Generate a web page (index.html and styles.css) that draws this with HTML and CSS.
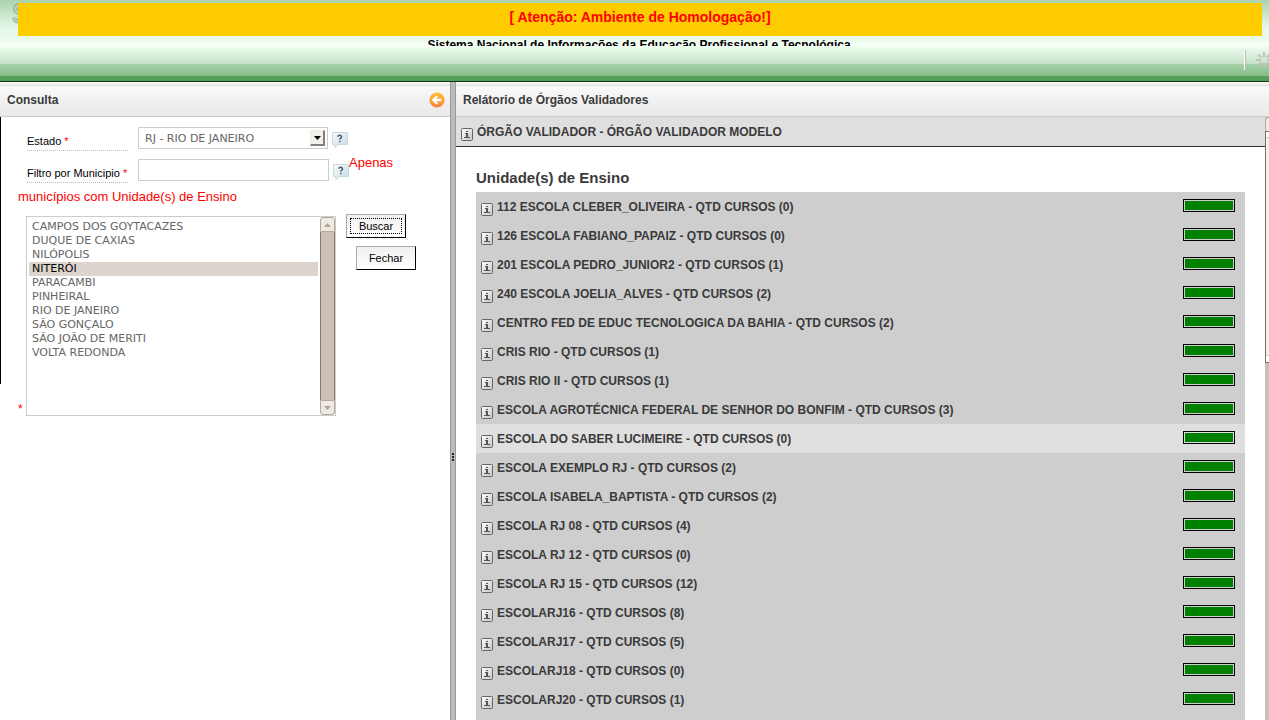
FILE: index.html
```html
<!DOCTYPE html>
<html lang="pt-BR">
<head>
<meta charset="utf-8">
<title>Sistec</title>
<link rel="stylesheet" href="styles.css">
</head>
<body>
<svg class="defs" aria-hidden="true">
  <defs>
    <linearGradient id="orange" x1="0" y1="0" x2="0" y2="1"><stop offset="0" stop-color="#ffc22e"/><stop offset="1" stop-color="#ff7f3c"/></linearGradient>
    <linearGradient id="key" x1="0" y1="0" x2="1" y2="1"><stop offset="0" stop-color="#fff"/><stop offset="1" stop-color="#c4c4c4"/></linearGradient>
    <linearGradient id="bubble" x1="0" y1="0" x2="1" y2="1"><stop offset="0" stop-color="#f8fbfc"/><stop offset="1" stop-color="#c6dbe4"/></linearGradient>
  </defs>
  <symbol id="info" viewBox="0 0 12 13">
    <rect x=".5" y=".5" width="11" height="12" rx="1" fill="url(#key)" stroke="#666"/>
    <path d="M5 3h2v1H5zM4 5h3v4h2v1H3V9h2V6H4z" fill="#555"/>
  </symbol>
  <symbol id="help" viewBox="0 0 16 16">
    <path d="M.5 .5h15v12H6L3 15.500 2.500 12.500h-2z" fill="url(#bubble)" stroke="#c8d8df"/>
    <path d="M6 4.800C6 2.800 9.600 2.800 9.500 4.900 9.400 6.200 7.900 6 7.900 7.600M7.900 8.800v1.400" fill="none" stroke="#4c5a6b" stroke-width="1.500"/>
  </symbol>
</svg>
<header class="top">
  <div class="logo">SISTEC</div>
  <div class="alert">[ Atenção: Ambiente de Homologação!]</div>
  <div class="system"><span>Sistema Nacional de Informações da Educação Profissional e Tecnológica</span></div>
  <div class="toolbar">
    <span class="divider"></span>
    <svg class="spinner" viewBox="0 0 16 16" aria-hidden="true"><path d="M8 0v5M8 11v5M0 8h5M11 8h5M2.500 2.500l3 3M10.500 10.500l3 3M13.500 2.500l-3 3M5.500 10.500l-3 3" stroke="#c0c0c0" stroke-width="2"/></svg>
  </div>
</header>
<main class="panes">
  <section class="query">
    <div class="bar">
      <h2>Consulta</h2>
      <button class="collapse" type="button" aria-label="Recolher"><svg viewBox="0 0 16 16"><circle cx="8" cy="8" r="7.600" fill="url(#orange)"/><path d="M12.500 8H5M8.200 4.200L4.400 8l3.800 3.800" fill="none" stroke="#fff" stroke-width="2.400"/></svg></button>
    </div>
    <form class="form">
      <div class="field">
        <label for="estado">Estado <em>*</em></label>
        <div class="combo">
          <select id="estado"><option>RJ - RIO DE JANEIRO</option></select>
          <span class="arrow"><svg viewBox="0 0 7 4"><path d="M0 0h7L3.500 4z"/></svg></span>
        </div>
        <svg class="help"><use href="#help"/></svg>
      </div>
      <div class="field">
        <label for="filtro">Filtro por Municipio <em>*</em></label>
        <input id="filtro" type="text">
        <svg class="help"><use href="#help"/></svg>
        <span class="note">Apenas</span>
      </div>
      <p class="note rest">municípios com Unidade(s) de Ensino</p>
      <div class="choose">
        <em class="required">*</em>
        <div class="listbox">
          <select size="10" aria-label="Municípios">
            <option>CAMPOS DOS GOYTACAZES</option>
            <option>DUQUE DE CAXIAS</option>
            <option>NILÓPOLIS</option>
            <option selected>NITERÓI</option>
            <option>PARACAMBI</option>
            <option>PINHEIRAL</option>
            <option>RIO DE JANEIRO</option>
            <option>SÃO GONÇALO</option>
            <option>SÃO JOÃO DE MERITI</option>
            <option>VOLTA REDONDA</option>
          </select>
          <div class="scroll" aria-hidden="true">
            <span class="step up"><svg viewBox="0 0 7 4"><path d="M0 4h7L3.500 0z"/></svg></span>
            <span class="thumb"></span>
            <span class="step down"><svg viewBox="0 0 7 4"><path d="M0 0h7L3.500 4z"/></svg></span>
          </div>
        </div>
        <div class="actions">
          <button type="button" class="btn default"><span>Buscar</span></button>
          <button type="button" class="btn close"><span>Fechar</span></button>
        </div>
      </div>
    </form>
  </section>
  <div class="splitter"><span></span></div>
  <section class="report">
    <div class="bar"><h2>Relátorio de Órgãos Validadores</h2></div>
    <div class="view">
      <div class="content">
        <div class="agency"><button type="button" class="info" aria-label="Detalhes"><svg><use href="#info"/></svg></button><span>ÓRGÃO VALIDADOR - ÓRGÃO VALIDADOR MODELO</span></div>
        <h3>Unidade(s) de Ensino</h3>
        <ul class="units">
          <li><button type="button" class="info" aria-label="Detalhes"><svg><use href="#info"/></svg></button><span>112 ESCOLA CLEBER_OLIVEIRA - QTD CURSOS (0)</span><i class="meter"></i></li>
          <li><button type="button" class="info" aria-label="Detalhes"><svg><use href="#info"/></svg></button><span>126 ESCOLA FABIANO_PAPAIZ - QTD CURSOS (0)</span><i class="meter"></i></li>
          <li><button type="button" class="info" aria-label="Detalhes"><svg><use href="#info"/></svg></button><span>201 ESCOLA PEDRO_JUNIOR2 - QTD CURSOS (1)</span><i class="meter"></i></li>
          <li><button type="button" class="info" aria-label="Detalhes"><svg><use href="#info"/></svg></button><span>240 ESCOLA JOELIA_ALVES - QTD CURSOS (2)</span><i class="meter"></i></li>
          <li><button type="button" class="info" aria-label="Detalhes"><svg><use href="#info"/></svg></button><span>CENTRO FED DE EDUC TECNOLOGICA DA BAHIA - QTD CURSOS (2)</span><i class="meter"></i></li>
          <li><button type="button" class="info" aria-label="Detalhes"><svg><use href="#info"/></svg></button><span>CRIS RIO - QTD CURSOS (1)</span><i class="meter"></i></li>
          <li><button type="button" class="info" aria-label="Detalhes"><svg><use href="#info"/></svg></button><span>CRIS RIO II - QTD CURSOS (1)</span><i class="meter"></i></li>
          <li><button type="button" class="info" aria-label="Detalhes"><svg><use href="#info"/></svg></button><span>ESCOLA AGROTÉCNICA FEDERAL DE SENHOR DO BONFIM - QTD CURSOS (3)</span><i class="meter"></i></li>
          <li class="active"><button type="button" class="info" aria-label="Detalhes"><svg><use href="#info"/></svg></button><span>ESCOLA DO SABER LUCIMEIRE - QTD CURSOS (0)</span><i class="meter"></i></li>
          <li><button type="button" class="info" aria-label="Detalhes"><svg><use href="#info"/></svg></button><span>ESCOLA EXEMPLO RJ - QTD CURSOS (2)</span><i class="meter"></i></li>
          <li><button type="button" class="info" aria-label="Detalhes"><svg><use href="#info"/></svg></button><span>ESCOLA ISABELA_BAPTISTA - QTD CURSOS (2)</span><i class="meter"></i></li>
          <li><button type="button" class="info" aria-label="Detalhes"><svg><use href="#info"/></svg></button><span>ESCOLA RJ 08 - QTD CURSOS (4)</span><i class="meter"></i></li>
          <li><button type="button" class="info" aria-label="Detalhes"><svg><use href="#info"/></svg></button><span>ESCOLA RJ 12 - QTD CURSOS (0)</span><i class="meter"></i></li>
          <li><button type="button" class="info" aria-label="Detalhes"><svg><use href="#info"/></svg></button><span>ESCOLA RJ 15 - QTD CURSOS (12)</span><i class="meter"></i></li>
          <li><button type="button" class="info" aria-label="Detalhes"><svg><use href="#info"/></svg></button><span>ESCOLARJ16 - QTD CURSOS (8)</span><i class="meter"></i></li>
          <li><button type="button" class="info" aria-label="Detalhes"><svg><use href="#info"/></svg></button><span>ESCOLARJ17 - QTD CURSOS (5)</span><i class="meter"></i></li>
          <li><button type="button" class="info" aria-label="Detalhes"><svg><use href="#info"/></svg></button><span>ESCOLARJ18 - QTD CURSOS (0)</span><i class="meter"></i></li>
          <li><button type="button" class="info" aria-label="Detalhes"><svg><use href="#info"/></svg></button><span>ESCOLARJ20 - QTD CURSOS (1)</span><i class="meter"></i></li>
        </ul>
      </div>
      <div class="edge" aria-hidden="true"><span class="edge-step"></span><span class="edge-thumb"></span></div>
    </div>
  </section>
</main>
</body>
</html>
```
FILE: styles.css
```css
* { box-sizing: border-box; }
body {
  margin: 0;
  height: 100vh;
  display: flex;
  flex-direction: column;
  overflow: hidden;
  background: #fff;
  color: #3a3a3a;
  font-family: "Liberation Sans", Arial, sans-serif;
  font-size: 12px;
}
h2, h3, p, ul { margin: 0; padding: 0; }
em { font-style: normal; color: #f00; }
button { padding: 0; border: 0; background: none; font: inherit; }
svg { display: block; }
.defs { position: absolute; width: 0; height: 0; }

.top {
  position: relative;
  flex: none;
  overflow: hidden;
  padding-top: 3px;
  border-bottom: 1px solid #12351c;
  background: linear-gradient(#aad3ae 0, #e6f8e7 28px, #e8fae9 38px, #fafffa 46px, #f0fff1 46px, #c4e1c7 64px, #a5d3a9 64px, #86bd89 76px, #559f5a 76px);
}
.logo {
  position: absolute;
  left: 12px;
  top: -4px;
  font-size: 28px;
  line-height: 36px;
  color: #b9d3bc;
  text-shadow: 0 0 2px #445;
}
.alert {
  position: relative;
  margin: 0 7px 0 18px;
  height: 33px;
  line-height: 29px;
  background: #fc0;
  color: #f00;
  font-size: 14px;
  font-weight: bold;
  text-align: center;
}
.system {
  height: 10px;
  padding: 2px 0 0 9px;
  overflow: hidden;
  color: #000;
  font-weight: bold;
  line-height: 14px;
  text-align: center;
}
.toolbar { display: flex; justify-content: flex-end; gap: 10px; padding: 4px 0 11px; }
.divider { width: 2px; height: 20px; background: linear-gradient(90deg, #fff 50%, #bbb 50%); }
.spinner { width: 16px; height: 16px; margin: 2px -3px 0 0; }

.panes { flex: 1; min-height: 0; display: flex; }
.query { flex: 0 0 450px; }
.report { flex: 1; min-width: 0; display: flex; flex-direction: column; }
.bar {
  flex: none;
  height: 35px;
  display: flex;
  justify-content: space-between;
  align-items: center;
  padding: 1px 5px 0 7px;
  border-bottom: 1px solid #ccc;
  background: linear-gradient(#fff 0, #e0e0e0 4px, #fafafa 4px, #e8e8e8 100%);
}
h2 { font-size: 12px; line-height: 16px; }
.collapse { padding-top: 1px; }
.collapse svg { width: 16px; height: 16px; }
.splitter {
  flex: 0 0 6px;
  display: flex;
  align-items: center;
  justify-content: center;
  padding-top: 112px;
  border: solid #999;
  border-width: 0 1px;
  background: #bbb;
}
.splitter span { width: 2px; height: 8px; background: repeating-linear-gradient(#222 0 2px, transparent 2px 3px); }

.form { padding: 10px 0 0 18px; background: linear-gradient(#000, #000) 0 0 / 1px 267px no-repeat; }
.field { display: flex; align-items: flex-start; height: 32px; padding-left: 9px; }
.field label {
  width: 101px;
  height: 24px;
  margin-right: 10px;
  padding-top: 6px;
  border-bottom: 1px dotted #bbb;
  color: #000;
  font-size: 11px;
  line-height: 16px;
}
.combo { display: grid; width: 190px; }
.combo select, .combo .arrow { grid-area: 1 / 1; }
.combo select, .field input {
  height: 22px;
  padding: 0 6px;
  border: 1px solid #ccc;
  border-radius: 0;
  background: #fff;
  color: #666;
  font: 11px "DejaVu Sans", sans-serif;
  appearance: none;
}
.field input { width: 191px; }
.arrow {
  justify-self: end;
  display: grid;
  place-items: center;
  width: 15px;
  height: 16px;
  margin: 3px 3px 0 0;
  border: 1px solid #ece9e4;
  border-right: 2px solid #888078;
  border-bottom: 2px solid #888078;
  background: #f3f0ec;
  pointer-events: none;
}
.arrow svg { width: 7px; height: 4px; }
.help { width: 16px; height: 16px; margin: 5px 0 0 4px; }
.note { color: #f00; font-size: 13px; line-height: 16px; }
.field .note { margin-top: -4px; }
.field + .note { margin-top: -2px; }
.choose { display: flex; align-items: flex-start; margin-top: 9px; }
.required { align-self: flex-end; width: 8px; line-height: 14px; }
.listbox { display: flex; width: 310px; height: 200px; margin-top: 2px; border: 1px solid #ccc; }
.listbox select {
  flex: 1;
  min-width: 0;
  height: 198px;
  padding: 3px 2px;
  border: 0;
  outline: 0;
  background: #fff;
  color: #666;
  font: 11px "DejaVu Sans", sans-serif;
  appearance: none;
  overflow: hidden;
}
.listbox option { min-height: 14px; height: 14px; padding: 0 3px; line-height: 14px; }
.listbox option:checked { background: #ddd4cd linear-gradient(#ddd4cd, #ddd4cd); color: #000; }
.scroll { width: 15px; display: flex; flex-direction: column; }
.step { display: grid; place-items: center; height: 15px; border: 1px solid #b5a899; background: #edebe4; }
.step svg { width: 7px; height: 4px; fill: #b0a394; }
.up { border-radius: 3px 3px 0 0; }
.down { border-radius: 0 0 3px 3px; }
.thumb { flex: 1; border: solid #857a6f; border-width: 0 1px; background: #ccc0b6; }
.actions { display: flex; flex-direction: column; gap: 8px; margin-left: 10px; }
.btn {
  width: 60px;
  height: 24px;
  padding: 3px;
  border: 1px solid #000;
  border-top-color: #aaa;
  border-left-color: #aaa;
  background: linear-gradient(#f0f0f0, #fff);
  color: #000;
  font-size: 11px;
  line-height: 14px;
}
.btn span { display: block; border: 1px solid transparent; }
.default span { border: 1px dotted #000; }
.close { margin-left: 10px; }

.view { flex: 1; min-height: 0; display: flex; overflow: hidden; }
.content { flex: 1; min-width: 0; display: flex; flex-direction: column; }
.agency {
  flex: none;
  display: flex;
  align-items: flex-start;
  height: 30px;
  padding: 7px 5px 0;
  border-bottom: 1px solid #333;
  background: #dfdfdf;
  font-weight: bold;
  line-height: 16px;
}
.info { flex: none; width: 12px; height: 13px; margin: 4px 4px 0 0; }
.info svg { width: 12px; height: 13px; }
h3 { padding: 22px 20px 5px; font-size: 15px; line-height: 18px; }
.units { flex: 1 0 auto; margin: 0 20px; background: #cecece; list-style: none; font-weight: bold; }
.units li { display: flex; align-items: flex-start; height: 29px; padding: 7px 10px 0 5px; line-height: 16px; }
.units .active { background: #dfdfdf; }
.meter { width: 52px; height: 13px; margin-left: auto; padding: 1px; border: 1px solid #000; background: green content-box; }

.edge { flex: 0 0 4px; display: flex; flex-direction: column; background: #ccc0b6; }
.edge-step { height: 14px; border: solid #b5a899; border-width: 1px 0 0 1px; border-radius: 3px 0 0 0; background: #edebe4; }
.edge-thumb {
  height: 232px;
  border: solid #7c7168;
  border-width: 1px 0 1px 1px;
  background: linear-gradient(#fff 5px, #ccc 5px, #ccc 6px, #f4f0ed 6px, #f4f0ed 223px, #ccc 223px, #ccc 224px, #fff 224px);
}
```
